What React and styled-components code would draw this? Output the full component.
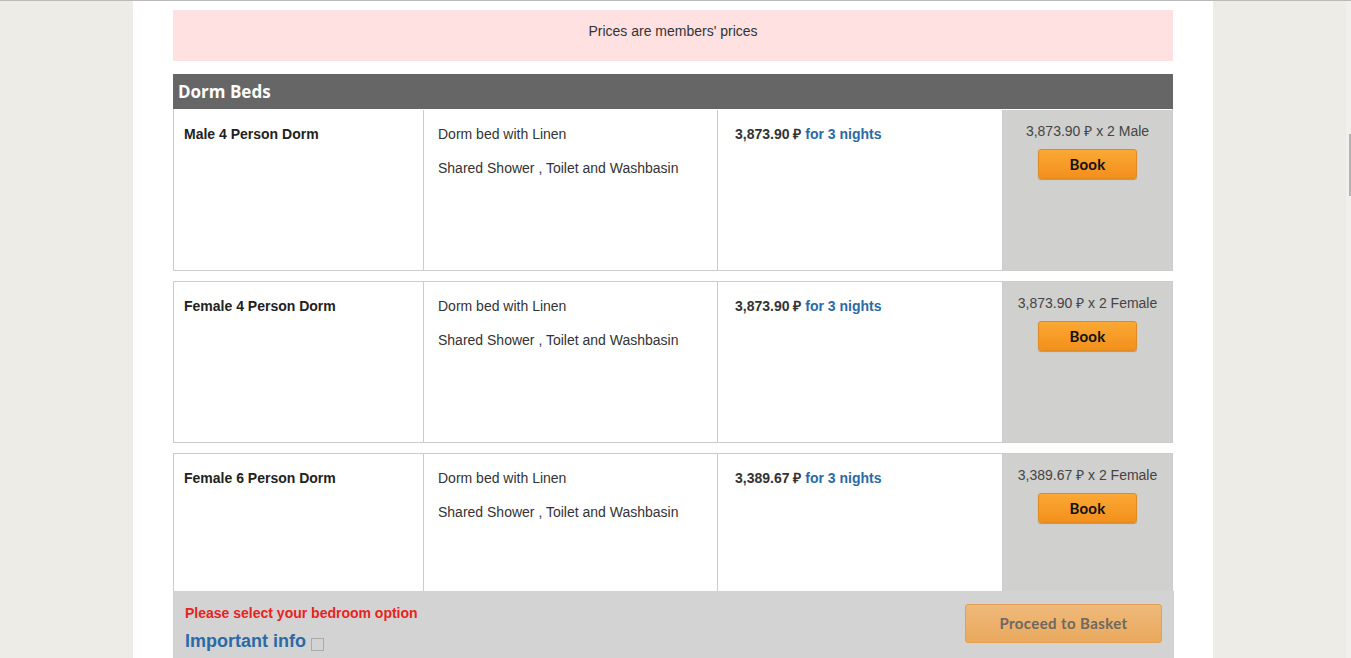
import styled, { createGlobalStyle } from "styled-components";

const GlobalStyle = createGlobalStyle`
  html, body {
    margin: 0;
    padding: 0;
    height: 100%;
    overflow: hidden;
  }
  body {
    background: #edece7;
    border-top: 1px solid #b9b9b9;
    box-sizing: border-box;
    font-family: "Liberation Sans", Arial, sans-serif;
    font-size: 14px;
    color: #333;
  }
`;

const Page = styled.div`
  display: flex;
  height: calc(100vh - 1px);
`;

const Main = styled.div`
  flex: 1;
  display: flex;
  justify-content: center;
`;

const ScrollTrack = styled.div`
  width: 5px;
  background: #f1f0ec;
  display: flex;
  flex-direction: column;
  align-items: flex-end;
  padding-top: 133px;
`;

const ScrollThumb = styled.div`
  width: 2px;
  height: 62px;
  background: #b4b4b4;
`;

const Sheet = styled.div`
  position: relative;
  width: 1080px;
  background: #fff;
  padding: 9px 40px 0;
  box-sizing: border-box;
  overflow: hidden;
`;

const Notice = styled.div`
  height: 51px;
  background: #ffe1e1;
  text-align: center;
  padding-top: 13px;
  box-sizing: border-box;
  line-height: 16px;
  color: #333;
  margin-bottom: 13px;
`;

const SectionHeader = styled.div`
  height: 35px;
  background: #666;
  color: #fff;
  font-family: "Open Sans", "Liberation Sans", sans-serif;
  font-weight: 700;
  font-size: 17px;
  display: flex;
  align-items: center;
  padding-left: 5px;
`;

const Room = styled.div`
  display: grid;
  grid-template-columns: 250px 294px 285px 1fr;
  border: 1px solid #ccc;
  box-sizing: border-box;
  margin-bottom: 10px;
  height: 162px;
  border-top: ${(p) => (p.first ? "none" : "1px solid #ccc")};
  padding-top: ${(p) => (p.first ? "1px" : "0")};
`;

const Cell = styled.div`
  padding: ${(p) => p.pad || "14px 10px"};
  border-right: 1px solid #ccc;
  line-height: 20px;
`;

const RoomName = styled.div`
  font-weight: 700;
  color: #222;
`;

const Feature = styled.div`
  margin-bottom: 14px;
  color: #333;
`;

const Price = styled.span`
  font-weight: 700;
  color: #333;
`;

const Nights = styled.span`
  font-weight: 700;
  color: #2b6aa6;
`;

const BookCell = styled.div`
  background: #d0d0ce;
  text-align: center;
  padding-top: 11px;
  line-height: 20px;
  color: #444;
`;

const BookButton = styled.button`
  display: block;
  margin: 8px auto 0;
  width: 99px;
  height: 30px;
  border: 1px solid #e08a22;
  border-radius: 3px;
  background: linear-gradient(#fba834, #f3901c);
  box-shadow: 0 1px 1px rgba(0, 0, 0, 0.25);
  font-family: "Lato", "DejaVu Sans", sans-serif;
  font-weight: 700;
  font-size: 15px;
  color: #111;
  letter-spacing: 0.3px;
`;

const Footer = styled.div`
  position: absolute;
  left: 40px;
  right: 39px;
  bottom: 0;
  height: 67px;
  background: #d3d3d3;
  display: flex;
  justify-content: space-between;
  padding: 13px 12px 0 12px;
  box-sizing: border-box;
`;

const FooterLeft = styled.div`
  display: flex;
  flex-direction: column;
`;

const Warning = styled.div`
  color: #e8231d;
  font-weight: 700;
  line-height: 18px;
`;

const InfoLink = styled.div`
  display: flex;
  align-items: center;
  gap: 5px;
  margin-top: 9px;
  color: #2b6aa6;
  font-weight: 700;
  font-size: 18px;
`;

const InfoBox = styled.span`
  width: 11px;
  height: 11px;
  border: 1px solid #aaa;
  margin-top: 5px;
`;

const ProceedButton = styled.button`
  width: 197px;
  height: 39px;
  border: 1px solid #e2a053;
  border-radius: 3px;
  background: linear-gradient(#efb97a, #e9a95e);
  font-family: "Lato", "DejaVu Sans", sans-serif;
  font-weight: 700;
  font-size: 15px;
  color: #6c6862;
  letter-spacing: 0.4px;
  padding-bottom: 2px;
`;

const rooms = [
  { name: "Male 4 Person Dorm", price: "3,873.90", who: "Male" },
  { name: "Female 4 Person Dorm", price: "3,873.90", who: "Female" },
  { name: "Female 6 Person Dorm", price: "3,389.67", who: "Female" },
];

export default function App() {
  return (
    <>
      <GlobalStyle />
      <Page>
        <Main>
          <Sheet>
            <Notice>Prices are members' prices</Notice>
            <SectionHeader>Dorm Beds</SectionHeader>
            {rooms.map((r, i) => (
              <Room key={r.name} first={i === 0}>
                <Cell pad="14px 10px">
                  <RoomName>{r.name}</RoomName>
                </Cell>
                <Cell pad="14px 14px">
                  <Feature>Dorm bed with Linen</Feature>
                  <Feature>Shared Shower , Toilet and Washbasin</Feature>
                </Cell>
                <Cell pad="14px 17px">
                  <Price>{r.price} ₽</Price> <Nights>for 3 nights</Nights>
                </Cell>
                <BookCell>
                  {r.price} ₽ x 2 {r.who}
                  <BookButton>Book</BookButton>
                </BookCell>
              </Room>
            ))}
            <Footer>
              <FooterLeft>
                <Warning>Please select your bedroom option</Warning>
                <InfoLink>
                  Important info
                  <InfoBox />
                </InfoLink>
              </FooterLeft>
              <ProceedButton>Proceed to Basket</ProceedButton>
            </Footer>
          </Sheet>
        </Main>
        <ScrollTrack>
          <ScrollThumb />
        </ScrollTrack>
      </Page>
    </>
  );
}
